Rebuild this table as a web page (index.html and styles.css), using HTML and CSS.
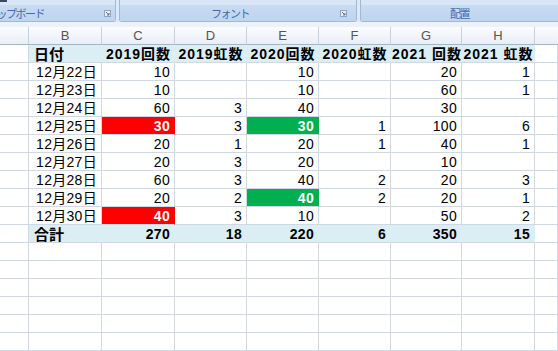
FILE: index.html
```html
<!DOCTYPE html>
<html lang="ja">
<head>
<meta charset="utf-8">
<title>Sheet</title>
<link rel="stylesheet" href="styles.css">
</head>
<body>
<div class="ribbon">
  <div class="group g1">
    <div class="group-body"><span class="mark"></span></div>
    <div class="group-label">
      <div class="label-clip"><span>クリップボード</span></div>
      <svg class="launcher" width="7" height="7" viewBox="0 0 7 7"><rect x="0.5" y="0.5" width="6" height="6" fill="#e9eef6" stroke="#8ea4c2"/><path d="M2 2 L5 5 M5 3 V5 H3" stroke="#5a6f8e" fill="none"/></svg>
    </div>
  </div>
  <div class="group g2">
    <div class="group-body"></div>
    <div class="group-label">
      <div class="label-center">フォント</div>
      <svg class="launcher" width="7" height="7" viewBox="0 0 7 7"><rect x="0.5" y="0.5" width="6" height="6" fill="#e9eef6" stroke="#8ea4c2"/><path d="M2 2 L5 5 M5 3 V5 H3" stroke="#5a6f8e" fill="none"/></svg>
    </div>
  </div>
  <div class="group g3">
    <div class="group-body"></div>
    <div class="group-label">
      <div class="label-center">配置</div>
    </div>
  </div>
</div>
<div class="gap"></div>
<div class="sheet">
  <div class="ch"></div><div class="ch">B</div><div class="ch">C</div><div class="ch">D</div><div class="ch">E</div><div class="ch">F</div><div class="ch">G</div><div class="ch">H</div><div class="ch last"></div>

  <div class="c"></div><div class="c hd t">日付</div><div class="c hd ht">2019回数</div><div class="c hd ht">2019虹数</div><div class="c hd ht">2020回数</div><div class="c hd ht">2020虹数</div><div class="c hd ht">2021 回数</div><div class="c hd ht">2021 虹数</div><div class="c"></div>

  <div class="c"></div><div class="c n">12月22日</div><div class="c n">10</div><div class="c n"></div><div class="c n">10</div><div class="c n"></div><div class="c n">20</div><div class="c n">1</div><div class="c"></div>
  <div class="c"></div><div class="c n">12月23日</div><div class="c n">10</div><div class="c n"></div><div class="c n">10</div><div class="c n"></div><div class="c n">60</div><div class="c n">1</div><div class="c"></div>
  <div class="c"></div><div class="c n">12月24日</div><div class="c n">60</div><div class="c n">3</div><div class="c n">40</div><div class="c n"></div><div class="c n">30</div><div class="c n"></div><div class="c"></div>
  <div class="c"></div><div class="c n">12月25日</div><div class="c n red">30</div><div class="c n">3</div><div class="c n green">30</div><div class="c n">1</div><div class="c n">100</div><div class="c n">6</div><div class="c"></div>
  <div class="c"></div><div class="c n">12月26日</div><div class="c n">20</div><div class="c n">1</div><div class="c n">20</div><div class="c n">1</div><div class="c n">40</div><div class="c n">1</div><div class="c"></div>
  <div class="c"></div><div class="c n">12月27日</div><div class="c n">20</div><div class="c n">3</div><div class="c n">20</div><div class="c n"></div><div class="c n">10</div><div class="c n"></div><div class="c"></div>
  <div class="c"></div><div class="c n">12月28日</div><div class="c n">60</div><div class="c n">3</div><div class="c n">40</div><div class="c n">2</div><div class="c n">20</div><div class="c n">3</div><div class="c"></div>
  <div class="c"></div><div class="c n">12月29日</div><div class="c n">20</div><div class="c n">2</div><div class="c n green">40</div><div class="c n">2</div><div class="c n">20</div><div class="c n">1</div><div class="c"></div>
  <div class="c"></div><div class="c n">12月30日</div><div class="c n red">40</div><div class="c n">3</div><div class="c n">10</div><div class="c n"></div><div class="c n">50</div><div class="c n">2</div><div class="c"></div>

  <div class="c"></div><div class="c hd t">合計</div><div class="c hd n b">270</div><div class="c hd n b">18</div><div class="c hd n b">220</div><div class="c hd n b">6</div><div class="c hd n b">350</div><div class="c hd n b">15</div><div class="c"></div>

  <div class="c"></div><div class="c"></div><div class="c"></div><div class="c"></div><div class="c"></div><div class="c"></div><div class="c"></div><div class="c"></div><div class="c"></div>
  <div class="c"></div><div class="c"></div><div class="c"></div><div class="c"></div><div class="c"></div><div class="c"></div><div class="c"></div><div class="c"></div><div class="c"></div>
  <div class="c"></div><div class="c"></div><div class="c"></div><div class="c"></div><div class="c"></div><div class="c"></div><div class="c"></div><div class="c"></div><div class="c"></div>
  <div class="c"></div><div class="c"></div><div class="c"></div><div class="c"></div><div class="c"></div><div class="c"></div><div class="c"></div><div class="c"></div><div class="c"></div>
  <div class="c"></div><div class="c"></div><div class="c"></div><div class="c"></div><div class="c"></div><div class="c"></div><div class="c"></div><div class="c"></div><div class="c"></div>
  <div class="c"></div><div class="c"></div><div class="c"></div><div class="c"></div><div class="c"></div><div class="c"></div><div class="c"></div><div class="c"></div><div class="c"></div>
</div>
</body>
</html>
```

FILE: styles.css
```css
html, body {
  margin: 0;
  padding: 0;
}
body {
  width: 558px;
  height: 351px;
  overflow: hidden;
  background: #ffffff;
  font-family: "Liberation Sans", "Noto Sans CJK JP", sans-serif;
}

/* ribbon */
.ribbon {
  display: flex;
  gap: 3px;
  height: 22px;
  background: #dfe9f5;
}
.group {
  display: flex;
  flex-direction: column;
  box-sizing: border-box;
  height: 22px;
  border: 1px solid #9fb8d6;
  border-top: none;
  border-radius: 0 0 3px 3px;
  background: #d9e6f5;
}
.g1 { width: 116px; border-left: none; border-radius: 0 0 3px 0; }
.g2 { width: 238px; }
.g3 { flex: 1; border-right: none; border-radius: 0 0 0 3px; }
.group-body {
  height: 5px;
}
.mark {
  display: block;
  width: 7px;
  height: 2px;
  background: #3b4a60;
}
.group-label {
  flex: 1;
  display: flex;
  align-items: center;
  background: linear-gradient(#c8dbf2, #bfd4ee);
  color: #3e6aaa;
  font-family: "Noto Sans CJK JP", sans-serif;
  font-size: 11px;
  letter-spacing: -1.5px;
  line-height: 16px;
}
.label-clip {
  width: 44px;
  display: flex;
  justify-content: flex-end;
  overflow: hidden;
  white-space: nowrap;
}
.label-clip span { flex: none; }
.label-center {
  flex: 1;
  text-align: center;
  white-space: nowrap;
}
.g1 .launcher { margin-left: 60px; }
.g2 .launcher { margin-right: 9px; }
.g3 .label-center { max-width: 258px; }

.gap {
  height: 5px;
  background: #eef2f8;
}

/* sheet */
.sheet {
  display: grid;
  grid-template-columns: 29px 73px 73px 72px 72px 72px 71px 73px 23px;
  grid-auto-rows: 18px;
}
.ch {
  box-sizing: border-box;
  border-right: 1px solid #c6d1df;
  border-bottom: 1px solid #9eb6ce;
  background: linear-gradient(#fbfcfe, #e9eef6);
  color: #555555;
  font-size: 13px;
  line-height: 17px;
  text-align: center;
}
.ch.last { border-right: none; }
.c {
  box-sizing: border-box;
  border-right: 1px solid #d0d7e5;
  border-bottom: 1px solid #d0d7e5;
  font-size: 14px;
  line-height: 19px;
  color: #000;
  white-space: nowrap;
  overflow: hidden;
}
.n {
  text-align: right;
  padding-right: 4px;
  letter-spacing: 0.3px;
}
.t {
  text-align: left;
  padding-left: 5px;
  font-weight: bold;
  font-size: 15px;
}
.ht {
  text-align: center;
  font-weight: bold;
  letter-spacing: 1px;
  padding-left: 1px;
}
.b { font-weight: bold; }
.hd {
  background: #daeef3;
  border-right-color: #daeef3;
}
.red {
  background: #ff0000;
  color: #fff;
  font-weight: bold;
  border-right-color: #ff0000;
}
.green {
  background: #00b050;
  color: #fff;
  font-weight: bold;
  border-right-color: #00b050;
}
```
